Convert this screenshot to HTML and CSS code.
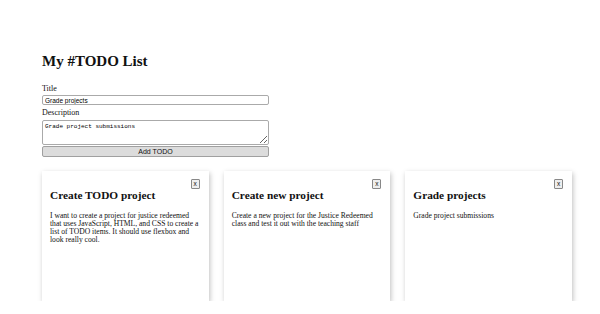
FILE: index.html
```html
<!DOCTYPE html>
<html lang="en">
<head>
    <meta charset="UTF-8">
    <title>My #TODO List</title>
    <link rel="stylesheet" href="styles.css">
</head>
<body>
    <div class="page">
        <h1>My #TODO List</h1>
        <form class="todo-form">
            <label for="title">Title</label>
            <input id="title" type="text" value="Grade projects">
            <label for="description">Description</label>
            <textarea id="description">Grade project submissions</textarea>
            <button type="button">Add TODO</button>
        </form>

        <div class="todo-list">
            <div class="todo-card">
                <button class="close-btn">x</button>
                <h2>Create TODO project</h2>
                <p>I want to create a project for justice redeemed that uses JavaScript, HTML, and CSS to create a list of TODO items. It should use flexbox and look really cool.</p>
            </div>
            <div class="todo-card">
                <button class="close-btn">x</button>
                <h2>Create new project</h2>
                <p>Create a new project for the Justice Redeemed class and test it out with the teaching staff</p>
            </div>
            <div class="todo-card">
                <button class="close-btn">x</button>
                <h2>Grade projects</h2>
                <p>Grade project submissions</p>
            </div>
        </div>
    </div>
</body>
</html>
```

FILE: styles.css
```css
body {
    margin: 0;
    background-color: #fff;
    font-family: "Liberation Serif", "Times New Roman", serif;
    color: #111;
}

.page {
    padding: 0 28px 0 42px;
}

h1 {
    font-size: 15px;
    margin: 53px 0 14px 0;
}

.todo-form {
    display: flex;
    flex-direction: column;
    width: 227px;
}

.todo-form label {
    font-size: 8px;
    line-height: 10px;
}

.todo-form input {
    font-family: "Liberation Sans", Arial, sans-serif;
    font-size: 6.5px;
    height: 10px;
    padding: 0 2px;
    margin: 1px 0 3px 0;
    border: 1px solid #aaa;
    border-radius: 2px;
    box-sizing: border-box;
}

.todo-form textarea {
    font-family: "Liberation Mono", "Courier New", monospace;
    font-size: 6px;
    height: 25px;
    padding: 2px 2px;
    margin: 2px 0 0 0;
    border: 1px solid #aaa;
    border-radius: 2px;
    box-sizing: border-box;
    resize: vertical;
}

.todo-form button {
    font-family: "Liberation Sans", Arial, sans-serif;
    font-size: 7px;
    height: 11px;
    padding: 0;
    margin-top: 1px;
    background-color: #dcdcdc;
    border: 1px solid #a0a0a0;
    border-radius: 2px;
    color: #111;
}

/* cards */
.todo-list {
    display: flex;
    gap: 15px;
    margin-top: 14px;
}

.todo-card {
    position: relative;
    width: 167px;
    height: 130px;
    box-sizing: border-box;
    padding: 8px 9px 8px 8px;
    background-color: #fff;
    box-shadow: 1px 2px 5px rgba(0, 0, 0, 0.25);
}

.todo-card h2 {
    font-size: 11.3px;
    margin: 10px 0 11px 0;
}

.todo-card p {
    font-size: 7.6px;
    line-height: 8px;
    margin: 0;
}

.close-btn {
    position: absolute;
    top: 8px;
    right: 9px;
    width: 9px;
    height: 10px;
    padding: 0;
    font-family: "Liberation Sans", Arial, sans-serif;
    font-size: 6.5px;
    line-height: 8px;
    background-color: #eee;
    border: 1px solid #888;
    border-radius: 1px;
    color: #111;
}
```
